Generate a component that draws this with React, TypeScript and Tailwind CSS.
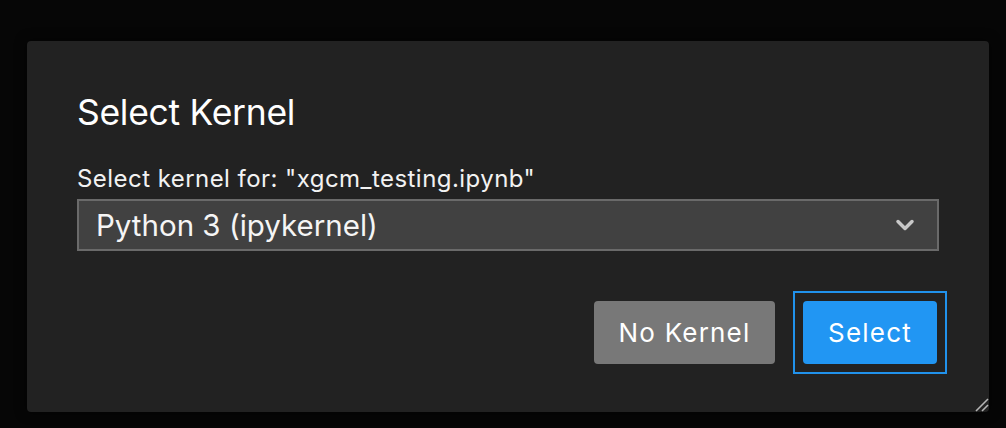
import { ChevronDown } from 'lucide-react'

const font = { fontFamily: 'Inter, "Liberation Sans", sans-serif' }

export default function App() {
    return (
        <div className="w-[1006px] h-[428px] bg-[#060606] pt-[41px] pl-[27px]" style={font}>
            <div className="relative w-[962px] h-[371px] rounded-[4px] bg-[#222222] px-[50px] pt-[52px] shadow-[0_0_12px_rgba(0,0,0,0.6)]">
                <h1 className="text-[35.5px] leading-[40px] text-white tracking-[-0.3px]">Select Kernel</h1>

                <label className="block mt-[32px] text-[24px] leading-[28px] text-[#f2f2f2] tracking-[0.45px]">
                    Select kernel for: "xgcm_testing.ipynb"
                </label>

                <div className="mt-[6px] h-[52px] border-2 border-[#6a6a6a] bg-[#414141] flex items-center pl-[17px] pr-[18px]">
                    <span className="flex-1 text-[29.5px] text-[#f5f5f5]">Python 3 (ipykernel)</span>
                    <ChevronDown className="w-[28px] h-[28px] text-[#c8c8c8]" strokeWidth={3} />
                </div>

                <div className="mt-[40px] -mr-[8px] flex justify-end items-center">
                    <button className="w-[181px] h-[63px] rounded-[4px] bg-[#787878] text-[26px] text-white tracking-[1.2px]">
                        No Kernel
                    </button>
                    <div className="ml-[18px] border-2 border-[#2192ec] p-[8px]">
                        <button className="block w-[134px] h-[63px] rounded-[4px] bg-[#2196f3] text-[26px] text-white tracking-[1.2px]">
                            Select
                        </button>
                    </div>
                </div>

                <svg className="absolute right-0 bottom-0" width="14" height="14" viewBox="0 0 14 14">
                    <line x1="13" y1="1" x2="1" y2="13" stroke="#b5b5b5" strokeWidth="1.6" />
                    <line x1="13" y1="7" x2="7" y2="13" stroke="#b5b5b5" strokeWidth="1.6" />
                </svg>
            </div>
        </div>
    )
}
